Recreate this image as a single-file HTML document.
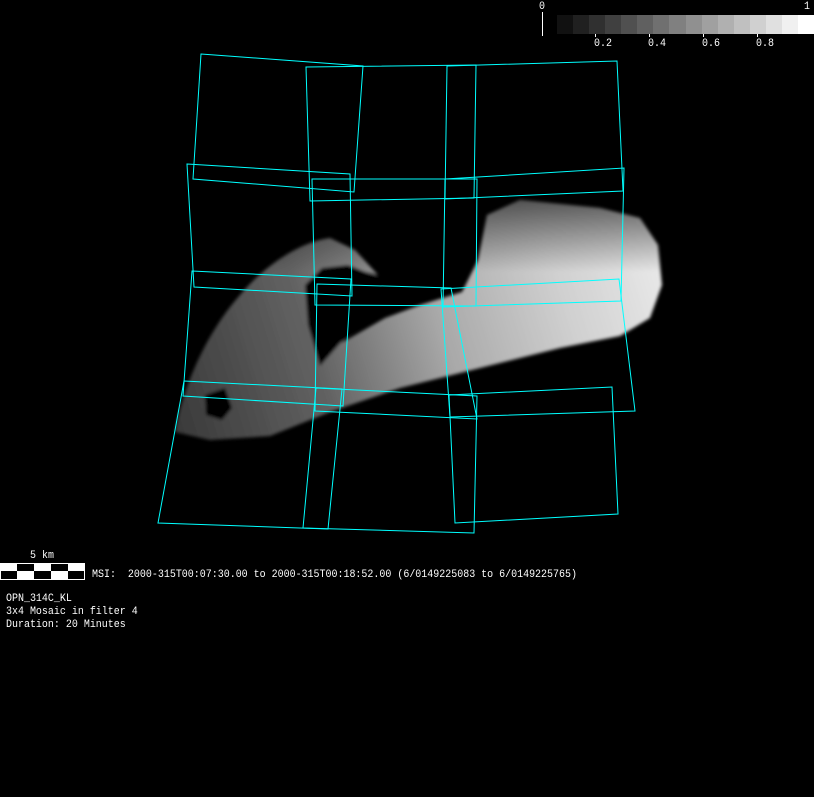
<!DOCTYPE html>
<html><head><meta charset="utf-8"><style>
html,body{margin:0;padding:0;background:#000;}
body{width:814px;height:797px;position:relative;overflow:hidden;font-family:"Liberation Mono","DejaVu Sans Mono",monospace;color:#fff;}
.t{position:absolute;font-size:11px;line-height:12px;white-space:pre;transform:scaleX(0.907);transform-origin:0 0;}
</style></head><body>
<svg width="814" height="797" style="position:absolute;left:0;top:0">
<defs>
<linearGradient id="g" x1="175" y1="420" x2="662" y2="270" gradientUnits="userSpaceOnUse">
<stop offset="0" stop-color="#3a3a3a"/>
<stop offset="0.3" stop-color="#626262"/>
<stop offset="0.55" stop-color="#a8a8a8"/>
<stop offset="0.8" stop-color="#d0d0d0"/>
<stop offset="1" stop-color="#e8e8e8"/>
</linearGradient>
<linearGradient id="top" x1="0" y1="200" x2="0" y2="440" gradientUnits="userSpaceOnUse">
<stop offset="0" stop-color="#000" stop-opacity="0.6"/>
<stop offset="0.3" stop-color="#000" stop-opacity="0"/>
<stop offset="1" stop-color="#000" stop-opacity="0"/>
</linearGradient>
<filter id="b"><feGaussianBlur stdDeviation="1.5"/></filter>
</defs>
<g filter="url(#b)">
<path d="M175,432 C180,400 200,340 240,295 C265,265 300,242 330,238 L355,250 L378,275 L350,268 L322,282 L312,320 L322,352 L350,338 L385,318 L420,305 L462,292 L478,260 L487,215 L520,200 L600,208 L640,218 L658,245 L662,285 L650,318 L620,336 L560,348 L480,368 L400,388 L330,412 L270,436 L210,440 Z" fill="url(#g)"/>
<path d="M175,432 C180,400 200,340 240,295 C265,265 300,242 330,238 L355,250 L378,275 L350,268 L322,282 L312,320 L322,352 L350,338 L385,318 L420,305 L462,292 L478,260 L487,215 L520,200 L600,208 L640,218 L658,245 L662,285 L650,318 L620,336 L560,348 L480,368 L400,388 L330,412 L270,436 L210,440 Z" fill="url(#top)"/>
<path d="M305,285 L322,268 L348,265 L376,276 L392,302 L352,330 L320,366 L308,325 Z" fill="#000"/>
<path d="M205,395 L225,388 L232,408 L222,420 L206,415 Z" fill="#000"/>
</g>
<g fill="none" stroke="#00ffff" stroke-width="1">
<polygon points="201,54 363,66 354,192 193,179"/>
<polygon points="306,67 476,65 474,198 310,201"/>
<polygon points="447,66 617,61 623,191 445,199"/>
<polygon points="187,164 350,174 352,296 194,287"/>
<polygon points="312,179 477,179 476,306 315,305"/>
<polygon points="445,179 624,168 621,301 443,307"/>
<polygon points="192,271 351,279 343,406 183,396"/>
<polygon points="317,284 451,288 477,419 315,411"/>
<polygon points="441,289 619,279 635,411 450,417"/>
<polygon points="184,381 342,389 328,529 158,523"/>
<polygon points="316,388 477,396 474,533 303,528"/>
<polygon points="449,395 612,387 618,514 455,523"/>
</g>
</svg>
<div style="position:absolute;left:542px;top:12px;width:1px;height:24px;background:#fff"></div>
<div style="position:absolute;left:557px;top:15px;width:257px;height:19px;display:flex">
<div style="flex:1;background:#111"></div><div style="flex:1;background:#202020"></div><div style="flex:1;background:#303030"></div><div style="flex:1;background:#404040"></div><div style="flex:1;background:#505050"></div><div style="flex:1;background:#606060"></div><div style="flex:1;background:#707070"></div><div style="flex:1;background:#808080"></div><div style="flex:1;background:#909090"></div><div style="flex:1;background:#a0a0a0"></div><div style="flex:1;background:#b0b0b0"></div><div style="flex:1;background:#c0c0c0"></div><div style="flex:1;background:#d0d0d0"></div><div style="flex:1;background:#e0e0e0"></div><div style="flex:1;background:#f0f0f0"></div><div style="flex:1;background:#fff"></div>
</div>
<div style="position:absolute;left:595px;top:34px;width:1px;height:3px;background:#fff"></div>
<div style="position:absolute;left:649px;top:34px;width:1px;height:3px;background:#fff"></div>
<div style="position:absolute;left:703px;top:34px;width:1px;height:3px;background:#fff"></div>
<div style="position:absolute;left:757px;top:34px;width:1px;height:3px;background:#fff"></div>
<div class="t" style="left:539px;top:1px">0</div>
<div class="t" style="left:804px;top:1px">1</div>
<div class="t" style="left:594px;top:38px">0.2</div>
<div class="t" style="left:648px;top:38px">0.4</div>
<div class="t" style="left:702px;top:38px">0.6</div>
<div class="t" style="left:756px;top:38px">0.8</div>
<div class="t" style="left:30px;top:550px">5 km</div>
<div style="position:absolute;left:0;top:563px;width:85px;height:17px;background:#fff"></div>
<div style="position:absolute;left:17px;top:564px;width:17px;height:7px;background:#000"></div>
<div style="position:absolute;left:51px;top:564px;width:17px;height:7px;background:#000"></div>
<div style="position:absolute;left:1px;top:571px;width:16px;height:8px;background:#000"></div>
<div style="position:absolute;left:34px;top:571px;width:17px;height:8px;background:#000"></div>
<div style="position:absolute;left:68px;top:571px;width:16px;height:8px;background:#000"></div>
<div class="t" style="left:92px;top:569px">MSI:  2000-315T00:07:30.00 to 2000-315T00:18:52.00 (6/0149225083 to 6/0149225765)</div>
<div class="t" style="left:6px;top:593px">OPN_314C_KL</div>
<div class="t" style="left:6px;top:606px">3x4 Mosaic in filter 4</div>
<div class="t" style="left:6px;top:619px">Duration: 20 Minutes</div>
</body></html>
